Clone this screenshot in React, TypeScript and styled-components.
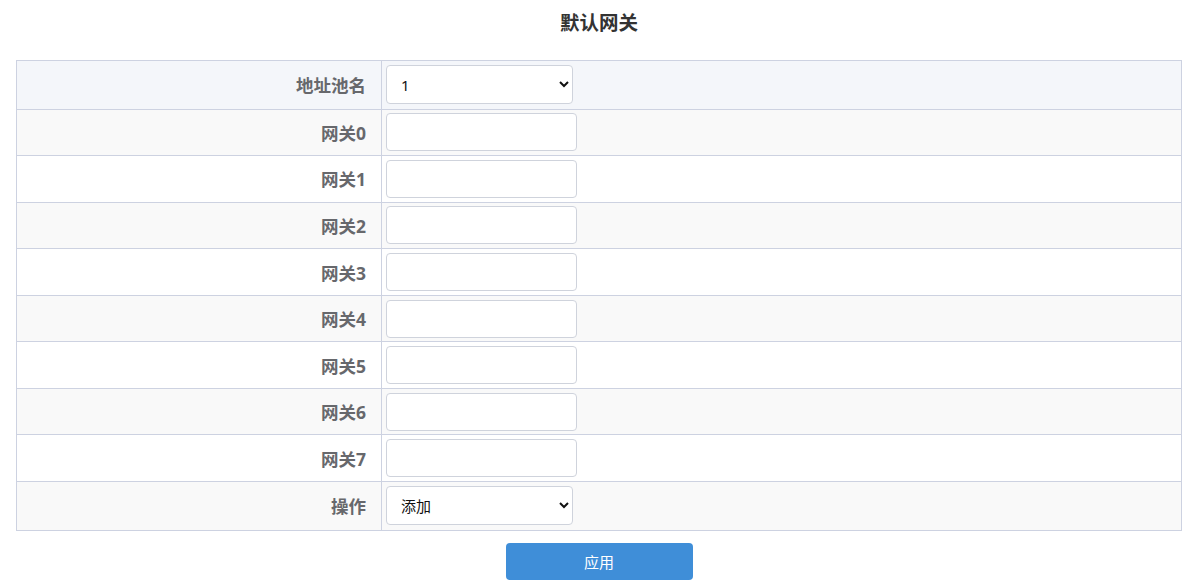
import React, { useState } from 'react';
import styled, { createGlobalStyle } from 'styled-components';

const GlobalStyle = createGlobalStyle`
  html, body {
    margin: 0;
    padding: 0;
    background: #ffffff;
    font-family: "Noto Sans", "Noto Sans CJK SC", sans-serif;
  }
`;

const Page = styled.div`
  padding: 0 16px;
`;

const Title = styled.h3`
  margin: 0;
  height: 60px;
  line-height: 46px;
  text-align: center;
  font-size: 19.5px;
  font-weight: 700;
  color: #333333;
`;

const Table = styled.table`
  width: 100%;
  border-collapse: collapse;
  border: 1px solid #cdd2e1;
`;

const Row = styled.tr<{ $tone: 'head' | 'gray' | 'white' }>`
  background: ${p => (p.$tone === 'head' ? '#f4f6fa' : p.$tone === 'gray' ? '#f9f9f9' : '#ffffff')};
  border-bottom: 1px solid #cdd2e1;
`;

const Label = styled.td<{ $tall?: boolean }>`
  width: 349px;
  height: ${p => (p.$tall ? '47.6px' : '45.55px')};
  padding: 0 15px 0 0;
  text-align: right;
  font-size: 17.5px;
  font-weight: 700;
  color: #67686c;
  border-right: 1px solid #cdd2e1;
`;

const Field = styled.td`
  padding: 0 4px;
`;

const TextInput = styled.input`
  box-sizing: border-box;
  display: block;
  width: 191px;
  height: 38px;
  border: 1px solid #cfd3dc;
  border-radius: 4px;
  background: #ffffff;
  font-family: inherit;
  font-size: 15px;
  padding: 0 12px;
  outline: none;
`;

const Select = styled.select`
  box-sizing: border-box;
  display: block;
  width: 187px;
  height: 39px;
  border: 1px solid #cfd3dc;
  border-radius: 4px;
  background: #ffffff;
  font-family: inherit;
  font-size: 15px;
  color: #111;
  padding: 0 8px 0 10px;
  outline: none;
`;

const Actions = styled.div`
  display: flex;
  justify-content: center;
  padding-top: 12px;
`;

const ApplyButton = styled.button`
  width: 187px;
  height: 37px;
  border: none;
  border-radius: 4px;
  background: #3f8ed8;
  color: #ffffff;
  font-family: inherit;
  font-size: 15px;
  cursor: pointer;
`;

const gateways = [0, 1, 2, 3, 4, 5, 6, 7];

export default function App() {
  const [pool, setPool] = useState('1');
  const [op, setOp] = useState('add');
  const [values, setValues] = useState<string[]>(gateways.map(() => ''));

  const handleChange = (i: number, v: string) => {
    const copy = [...values];
    copy[i] = v;
    setValues(copy);
  };

  return <>
    <GlobalStyle />
    <Page>
      <Title>默认网关</Title>
      <Table>
        <tbody>
          <Row $tone="head">
            <Label $tall>地址池名</Label>
            <Field>
              <Select value={pool} onChange={e => setPool(e.target.value)}>
                <option value="1">1</option>
                <option value="2">2</option>
              </Select>
            </Field>
          </Row>
          {gateways.map(i =>
            <Row key={i} $tone={i % 2 === 0 ? 'gray' : 'white'}>
              <Label>网关{i}</Label>
              <Field>
                <TextInput value={values[i]} onChange={e => handleChange(i, e.target.value)} />
              </Field>
            </Row>
          )}
          <Row $tone="gray">
            <Label $tall>操作</Label>
            <Field>
              <Select value={op} onChange={e => setOp(e.target.value)}>
                <option value="add">添加</option>
                <option value="del">删除</option>
              </Select>
            </Field>
          </Row>
        </tbody>
      </Table>
      <Actions>
        <ApplyButton>应用</ApplyButton>
      </Actions>
    </Page>
  </>;
}
